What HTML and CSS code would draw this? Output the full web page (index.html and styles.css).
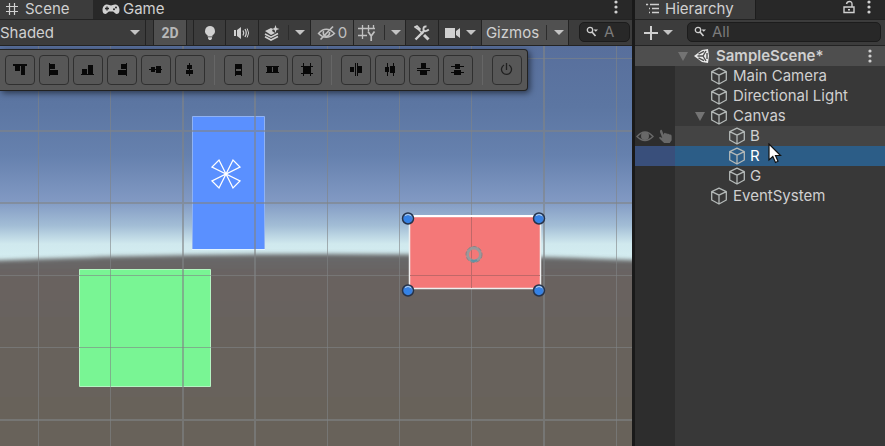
FILE: index.html
```html
<!DOCTYPE html>
<html lang="en">
<head>
<meta charset="utf-8">
<title>Scene editor</title>
<link rel="stylesheet" href="styles.css">
</head>
<body>
<svg class="defs" aria-hidden="true">
  <symbol id="cube" viewBox="0 0 18 18"><path d="M9 1.2 16.3 4.6V13L9 17 1.7 13V4.6ZM1.7 4.6 9 8.2 16.3 4.6M9 8.2V17" fill="none" stroke="currentColor" stroke-width="1.3" stroke-linejoin="round"/></symbol>
  <symbol id="dots" viewBox="0 0 4 14"><g fill="currentColor"><circle cx="2" cy="2" r="1.6"/><circle cx="2" cy="7" r="1.6"/><circle cx="2" cy="12" r="1.6"/></g></symbol>
  <symbol id="find" viewBox="0 0 12 12"><circle cx="4" cy="4" r="2.7" fill="none" stroke="currentColor" stroke-width="1.3"/><path d="M6 6 9.5 10" stroke="currentColor" stroke-width="1.6"/><path d="M7.5 3.5H12L9.8 5.8Z" fill="currentColor"/></symbol>
</svg>
<main class="editor">
  <section class="scene">
    <nav class="tabs">
      <button class="tab tab-scene active"><svg width="14" height="14" viewBox="0 0 14 14" fill="none" stroke="currentColor"><path d="M4.500 1V13M9.500 1V13M1 4.500H13M1 9.500H13" stroke-width="1.200"/></svg>Scene</button>
      <button class="tab tab-game"><svg width="18" height="12" viewBox="0 0 18 12"><path d="M5 1.500C7 1.500 7.500 2.500 9 2.500S11 1.500 13 1.500C16 1.500 17.500 4 17.500 7S16 11 14.500 11 12 8.500 11 8.500H7C6 8.500 5 11 3.500 11S.5 10 .5 7 2 1.500 5 1.500Z" fill="currentColor"/><path d="M5 3.500V7.500M3 5.500H7" stroke="#282828" stroke-width="1.300"/><circle cx="12" cy="6.300" r="1" fill="#282828"/><circle cx="14" cy="4.600" r="1" fill="#282828"/></svg>Game</button>
      <button class="more" aria-label="Scene options"><svg width="4" height="14"><use href="#dots"/></svg></button>
    </nav>
    <div class="toolbar">
      <div class="drop"><select aria-label="Draw mode"><option>Shaded</option></select></div>
      <button class="tool two-d on">2D</button>
      <button class="tool bulb" aria-label="Lighting"><svg width="12" height="16" viewBox="0 0 12 16" fill="currentColor"><path d="M6 1A5 5 0 0 1 8.500 10.300V11.500H3.500V10.300A5 5 0 0 1 6 1ZM4 12.200H8V13.500L7 15H5L4 13.500Z"/></svg></button>
      <button class="tool" aria-label="Audio"><svg width="16" height="14" viewBox="0 0 16 14"><path d="M0 4H2V10H0ZM3 4 7 1V13L3 10Z" fill="currentColor"/><path d="M9 4.500Q10.500 7 9 9.500M11 3Q13.500 7 11 11" stroke="currentColor" stroke-width="1.300" fill="none"/><path d="M13.200 2.500Q16 7 13.200 11.500" stroke="currentColor" fill="none"/></svg></button>
      <button class="tool split" aria-label="Effects"><svg width="16" height="16" viewBox="0 0 16 16"><path d="M1 6 7 3 9 4 8 6 11 8 7 10Z" fill="currentColor"/><path d="M1 9 7 12.200 14 8.500M1 11.800 7 15 14 11.500" stroke="currentColor" stroke-width="1.600" fill="none"/><path d="M11.500 0 12.500 3 15.500 4 12.500 5 11.500 8 10.500 5 8 4 10.500 3Z" fill="currentColor"/></svg><i class="bar"></i><i class="arrow"></i></button>
      <button class="tool hidden-count on" aria-label="Hidden objects: 0"><svg width="20" height="16" viewBox="0 0 20 16" fill="none" stroke="currentColor"><path d="M1.500 8.500Q9 0 17.500 8.500 9 16 1.500 8.500Z" stroke-width="1.400"/><path d="M6.500 6Q5.500 10 9 11.500 13 11 12.500 7" stroke-width="1.600"/><path d="M3.500 14.500 16 1.500" stroke-width="1.700"/></svg><span>0</span></button>
      <button class="tool split on" aria-label="Grid"><svg width="18" height="18" viewBox="0 0 18 18" fill="none" stroke="currentColor"><path d="M4.500 1V15M10.500 1V7M15.500 1V5M0 4.500H17M0 11.500H9" stroke-width="1.300"/><path d="M10 7.500 13.200 12 16.500 7.500M13.200 12V17" stroke-width="1.700"/></svg><i class="bar"></i><i class="arrow"></i></button>
      <button class="tool" aria-label="Component tools"><svg width="16" height="16" viewBox="0 0 16 16" fill="none" stroke="currentColor"><path d="M1 2 3 1 6 4 5 5ZM5 5 9 9" stroke-width="1.600"/><path d="M10 10 14.500 14.500" stroke-width="3"/><path d="M1.500 14.500 10 6" stroke-width="2.400"/><path d="M12.500 1.500Q9 1 9.500 5 11 7.500 14.800 4.500" stroke-width="2"/></svg></button>
      <button class="tool camera" aria-label="Camera"><svg width="16" height="12" viewBox="0 0 16 12" fill="currentColor"><path d="M0 1H10V11H0ZM11 4 15 1V11L11 8Z"/></svg><i class="arrow"></i></button>
      <button class="tool gizmos on">Gizmos<i class="bar"></i><i class="arrow"></i></button>
      <label class="search scene-search"><svg width="12" height="12"><use href="#find"/></svg><input type="search" aria-label="Search scene" placeholder="A"></label>
    </div>
    <div class="viewport">
      <svg class="canvas" role="img" aria-label="Scene canvas">
        <defs><filter id="soft" x="-5%" y="-5%" width="110%" height="110%"><feGaussianBlur stdDeviation="2"/></filter>
        <linearGradient id="earth" x2="0" y2="1"><stop stop-color="#68686a"/><stop offset=".02" stop-color="#69625f"/><stop offset=".12" stop-color="#67625a"/><stop offset="1" stop-color="#69625d"/></linearGradient>
        <radialGradient id="ball" cx=".45" cy=".6" r=".6"><stop stop-color="#2f83ed"/><stop offset=".65" stop-color="#3b80dd"/><stop offset="1" stop-color="#8fb9e8"/></radialGradient>
        <g id="handle"><circle r="5.500" fill="url(#ball)" stroke="#26334a" stroke-width="1.500"/><path d="M-3-3Q0-5 3-3" stroke="#b8d2ef" fill="none"/></g></defs>
        <g transform="translate(0 -46)">
          <path d="M-40 262Q320 246 680 262L2400 420V1600H-40Z" fill="url(#earth)" filter="url(#soft)"/>
          <path d="M192.500 116.500H264.500V249.500H192.500Z" fill="#5a90ff" stroke="#8fb2f4"/>
          <path d="M192 249.500H265" stroke="#e2f3ff"/>
          <path d="M79.500 269.500H210.500V386.500H79.500Z" fill="#79f594" stroke="#b4f5c2"/>
          <g stroke="#808386" stroke-opacity=".6">
            <path d="M38.500 46V1600M110.500 46V1600M327.500 46V1600M399.500 46V1600M471.500 46V1600M616.500 46V1600M0 58.500H2400M0 275.500H2400M0 347.500H2400"/>
            <path d="M183 46V1600M255 46V1600M544 46V1600M0 131H2400M0 203H2400M0 420H2400" stroke-width="2"/>
          </g>
          <path d="M410 216.500H540.500V288.500H409.500V216.500" fill="#f47878" stroke="#eee" stroke-width="1.500"/>
          <path d="M409 216H541" stroke="#fff" stroke-width="2"/>
          <path d="M471.500 217V288M410 275.500H540" stroke="#c06868"/>
          <g fill="none"><circle cx="474" cy="254.500" r="6.500" stroke="#9a999b" stroke-width="3"/><circle cx="474" cy="254.500" r="8" stroke="#8a8285" stroke-dasharray="4 2"/><path d="M471 260Q474 262 477 260" stroke="#5e93a5" stroke-width="2"/></g>
          <use href="#handle" x="408" y="218.500"/><use href="#handle" x="539" y="218.500"/><use href="#handle" x="408" y="290.500"/><use href="#handle" x="539" y="290.500"/>
          <path d="M226 174 212 167 219 160ZL233 160 240 167ZL240 181 233 188ZL219 188 212 181Z" stroke="#fff" stroke-width="1.300" fill="none"/>
        </g>
      </svg>
      <div class="align" role="toolbar" aria-label="Align">
        <button aria-label="Align top"><svg viewBox="0 0 16 16"><path d="M1 2H15V4H1ZM3 4H8V9H3ZM9 4H13V13H9Z"/></svg></button>
        <button aria-label="Align left"><svg viewBox="0 0 16 16"><path d="M3 1H4V14H3ZM4 2H9V7H4ZM4 8H12V13H4Z"/></svg></button>
        <button aria-label="Align bottom"><svg viewBox="0 0 16 16"><path d="M1 12H14V13H1ZM2 7H7V12H2ZM8 3H13V12H8Z"/></svg></button>
        <button aria-label="Align right"><svg viewBox="0 0 16 16"><path d="M12 1H13V14H12ZM7 2H12V7H7ZM4 8H12V13H4Z"/></svg></button>
        <button aria-label="Align middle"><svg viewBox="0 0 16 16"><path d="M1 7H14V8H1ZM3 5H7V10H3ZM8 4H13V11H8Z"/></svg></button>
        <button aria-label="Align center"><svg viewBox="0 0 16 16"><path d="M7 1H8V14H7ZM5 3H10V7H5ZM4 8H11V12H4Z"/></svg></button>
        <i></i>
        <button aria-label="Fill height"><svg viewBox="0 0 16 16"><path d="M4 2H5V14H4ZM10 2H11V14H10ZM5 2H10V7H5ZM5 9H10V13H5Z"/></svg></button>
        <button aria-label="Fill width"><svg viewBox="0 0 16 16"><path d="M2 5H7V11H2ZM8 5H13V11H8ZM1 4H14V5H1ZM1 10H14V11H1Z"/></svg></button>
        <button aria-label="Fill both"><svg viewBox="0 0 16 16"><path d="M5 5H11V11H5ZM4 1H5V14H4ZM11 1H12V14H11ZM2 4H14V5H2ZM2 11H14V12H2Z"/></svg></button>
        <i></i>
        <button aria-label="Join horizontally"><svg viewBox="0 0 16 16"><path d="M2 5H6V10H2ZM7 1H8V14H7ZM9 1H10V14H9ZM10 4H14V11H10Z"/></svg></button>
        <button aria-label="Distribute horizontally"><svg viewBox="0 0 16 16"><path d="M3 5H7V10H3ZM5 1H6V14H5ZM8 4H13V11H8ZM11 1H12V14H11Z"/></svg></button>
        <button aria-label="Join vertically"><svg viewBox="0 0 16 16"><path d="M5 1H10V6H5ZM1 6H14V7H1ZM1 8H14V9H1ZM4 9H11V13H4Z"/></svg></button>
        <button aria-label="Distribute vertically"><svg viewBox="0 0 16 16"><path d="M5 2H10V7H5ZM1 4H14V5H1ZM4 8H11V13H4ZM1 10H14V11H1Z"/></svg></button>
        <i></i>
        <button aria-label="Toggle"><svg viewBox="0 0 16 16"><path class="line" d="M5 3A5 5 0 1 0 10 3M7.500 1V8"/></svg></button>
      </div>
    </div>
  </section>
  <aside class="hierarchy">
    <nav class="tabs">
      <button class="tab tab-tree active"><svg width="14" height="12" viewBox="0 0 14 12" fill="none" stroke="currentColor"><path d="M0 1.500H2M4 1.500H13M3 5.500H4M6 5.500H13M3 9.500H4M6 9.500H13M1.500 1V2" stroke-width="1.300"/></svg>Hierarchy</button>
      <button class="lock" aria-label="Lock"><svg width="12" height="14" viewBox="0 0 12 14" fill="none" stroke="currentColor" stroke-width="1.400"><path d="M1 7H11V12.500H1ZM9 7V4Q9 1.500 6.500 1.500 4 1.500 3.500 4M5 9.800H7"/></svg></button>
      <button class="more" aria-label="Hierarchy options"><svg width="4" height="14"><use href="#dots"/></svg></button>
    </nav>
    <div class="toolbar">
      <button class="add" aria-label="Create"><svg width="16" height="16" viewBox="0 0 16 16"><path d="M8 1V15M1 8H15" stroke="currentColor" stroke-width="2"/></svg><i class="arrow"></i></button>
      <label class="search"><svg width="12" height="12"><use href="#find"/></svg><input type="search" aria-label="Search hierarchy" placeholder="All"></label>
    </div>
    <div class="root"><i class="fold"></i><svg width="17" height="16" viewBox="0 0 17 16"><path d="M0 8 8 2 14 1 15 8 14 15 8 14Z" fill="#ececec"/><path d="M3.500 8H9L12 3M9 8 12 13M4.500 6.200 10 3.300M4.500 9.800 10 12.700M13 5V11" stroke="#4e4e4e" stroke-width="1.400" fill="none"/></svg><b>SampleScene*</b><button class="more" aria-label="Scene menu"><svg width="4" height="14"><use href="#dots"/></svg></button></div>
    <ul class="tree">
      <li><span class="gutter"></span><span class="item"><svg><use href="#cube"/></svg>Main Camera</span></li>
      <li><span class="gutter"></span><span class="item"><svg><use href="#cube"/></svg>Directional Light</span></li>
      <li><span class="gutter"></span><span class="item parent"><i class="fold"></i><svg><use href="#cube"/></svg>Canvas</span></li>
      <li class="hover"><span class="gutter"><svg viewBox="0 0 18 14"><path d="M1 7Q9-2 17 7 9 15 1 7Z" fill="none" stroke="currentColor" stroke-width="1.500"/><circle cx="9" cy="6.500" r="4" fill="currentColor"/></svg><svg viewBox="0 0 18 16"><path d="M3 1Q4.500 0 5 2L6.500 6 7 4.500Q8 3.500 9 5 10 4 11 5.500 12 4.500 13 6 15 5 15 8V12L13 15H7L2 10Q1 8 3 8.500L5 9.500 2.500 3Z" fill="currentColor"/></svg></span><span class="item child"><svg><use href="#cube"/></svg>B</span></li>
      <li class="selected"><span class="gutter"></span><span class="item child"><svg><use href="#cube"/></svg>R</span>
        <svg class="pointer" viewBox="0 0 14 21" aria-hidden="true"><path d="M1 1V17L4.800 13.500 7.500 19.500 10 18.300 7.500 12.500H12.500Z" fill="#fff" stroke="#111" stroke-width="1.200"/></svg></li>
      <li><span class="gutter"></span><span class="item child"><svg><use href="#cube"/></svg>G</span></li>
      <li><span class="gutter"></span><span class="item"><svg><use href="#cube"/></svg>EventSystem</span></li>
    </ul>
    <div class="rest"></div>
  </aside>
</main>
</body>
</html>
```
FILE: styles.css
```css
* { box-sizing: border-box; }
body { margin: 0; background: #191919; color: #d0d0d0; font: 15px/20px Inter, "Liberation Sans", sans-serif; }
button, input, select { margin: 0; padding: 0; border: 0; background: none; color: inherit; font: inherit; }
button { display: flex; align-items: center; flex: none; }
svg { flex: none; }
.defs { position: absolute; width: 0; height: 0; }
.editor { display: flex; gap: 3px; min-height: 100vh; overflow: hidden; }
.scene { flex: 1; min-width: 0; display: flex; flex-direction: column; }
.hierarchy { width: 250px; display: flex; flex-direction: column; background: #383838; }

.tabs { display: flex; height: 19px; background: #282828; overflow: hidden; }
.tab { height: 18px; gap: 6px; }
.tab.active { background: #3c3c3c; height: 19px; padding-bottom: 1px; }
.tab-scene { width: 93px; padding-left: 5px; }
.tab-game { padding-left: 9px; gap: 3px; }
.tab-tree { width: 121px; padding-left: 11px; gap: 5px; border-right: 1px solid #1d1d1d; }
.more { width: 4px; margin-left: auto; margin-right: 14px; }
.tabs .more { height: 14px; }
.lock { height: 14px; margin-left: auto; }
.lock + .more { margin-left: 12px; }

.toolbar { display: flex; align-items: stretch; height: 27px; background: #3c3c3c; border-top: 1px solid #232323; border-bottom: 1px solid #232323; }
.drop { position: relative; width: 146px; border-right: 1px solid #232323; display: flex; }
.drop select { appearance: none; width: 100%; }
.drop::after { content: ""; position: absolute; right: 5px; top: 10px; border: 5px solid transparent; border-top-color: #c4c4c4; border-bottom: 0; pointer-events: none; }
.tool { justify-content: center; width: 33px; border-right: 1px solid #232323; }
.tool.on { background: #505050; }
.two-d { margin: 0 6px 0 7px; width: 34px; border-left: 1px solid #232323; font: 700 14px/20px Roboto, sans-serif; color: #b8b8b8; }
.bulb { border-left: 1px solid #232323; }
.split { width: 52px; gap: 6px; }
.split .bar { margin-left: 2px; }
.hidden-count { width: 43px; gap: 1px; }
.hidden-count, .split.on { color: #c0c0c0; }
.camera { width: 43px; gap: 5px; }
.gizmos { width: 87px; gap: 7px; }
.bar { width: 1px; height: 15px; background: #2c2c2c; }
.arrow { border: 5px solid transparent; border-top-color: #c4c4c4; border-bottom: 0; }
.search { flex: 1; min-width: 0; display: flex; align-items: center; gap: 6px; height: 20px; margin: 2px 4px 0 14px; padding-left: 6px; background: #282828; border: 1px solid #1c1c1c; border-radius: 5px; }
.search input { flex: 1; min-width: 0; outline: 0; }
.search input::placeholder { color: #7b7b7b; opacity: 1; }
.scene-search { margin: 2px 2px 0 10px; }
.add { padding-left: 8px; gap: 4px; }

.viewport { position: relative; flex: 1; overflow: hidden; background: linear-gradient(#586f9c 0, #5c76a2 60px, #6681ae 110px, #8199c3 155px, #a3bed6 180px, #d0e9ee 198px, #d6eff2 220px); }
.canvas { position: absolute; inset: 0; width: 100%; height: 100%; }
.align { position: absolute; left: 0; top: 3px; display: flex; align-items: center; gap: 4px; height: 42px; padding: 0 5px; background: #575757; border: solid #222; border-width: 1px 1px 1px 0; border-radius: 0 4px 4px 0; box-shadow: 2px 2px 6px #0008; }
.align button { justify-content: center; width: 30px; height: 30px; border: 1px solid #303030; border-radius: 4px; }
.align svg { width: 16px; height: 16px; fill: #080808; }
.align .line { fill: none; stroke: #202020; stroke-width: 1.3; }
.align i { width: 1px; height: 30px; margin: 0 5px; background: #666; }

.root { display: flex; align-items: center; height: 20px; padding-left: 43px; background: #4e4e4e; }
.root b { margin-left: 5px; font-weight: 600; }
.root .fold { margin-right: 6px; }
.root .more { margin-right: 13px; }
.fold { border: 5px solid transparent; border-top: 9px solid #737373; border-bottom: 0; }
.tree { margin: 0; padding: 0; list-style: none; }
.tree li { position: relative; display: flex; height: 20px; }
.gutter { display: flex; align-items: center; gap: 3px; width: 40px; padding-left: 1px; background: #2d2d2d; color: #686868; }
.gutter svg { width: 18px; height: 15px; }
.item { flex: 1; display: flex; align-items: center; gap: 5px; padding-left: 35px; }
.item svg { width: 18px; height: 18px; color: #b4b9b8; }
.parent { padding-left: 20px; }
.parent .fold + svg { margin-left: 0; }
.child { padding-left: 53px; gap: 4px; }
.hover { background: #444; }
.selected { background: #2c5d87; color: #fff; }
.selected .gutter { background: #394f7b; }
.pointer { position: absolute; left: 133px; top: -3px; width: 14px; height: 21px; z-index: 1; }
.rest { flex: 1; width: 40px; background: #2d2d2d; }
```
